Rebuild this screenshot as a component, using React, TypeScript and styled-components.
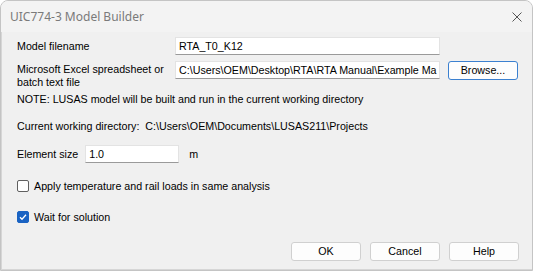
import * as React from 'react';
import styled, { createGlobalStyle } from 'styled-components';

const Global = createGlobalStyle`
	html, body {
		margin: 0;
		padding: 0;
		background: #ffffff;
	}
	body {
		font-family: 'Liberation Sans', Arial, sans-serif;
		font-size: 10.7px;
		color: #000;
	}
`;

const Window = styled.div`
	width: 533px;
	height: 271px;
	box-sizing: border-box;
	border: 1px solid #c4c4c4;
	border-radius: 8px 8px 0 0;
	background: #f0f0f0;
	display: flex;
	flex-direction: column;
	overflow: hidden;
`;

const TitleBar = styled.div`
	height: 31px;
	flex: none;
	background: #f3f3f3;
	display: flex;
	align-items: center;
	justify-content: space-between;
	padding: 0 10px 0 9px;
`;

const Title = styled.span`
	font-family: 'Noto Sans', 'Open Sans', sans-serif;
	font-size: 12px;
	color: #7a7a7a;
`;

const Close = styled.svg`
	width: 10px;
	height: 10px;
`;

const Body = styled.div`
	flex: 1;
	border-left: 1px solid #d6d6d6;
	border-bottom: 1px solid #d6d6d6;
	padding: 5px 0 0 15px;
	display: flex;
	flex-direction: column;
`;

const FormGrid = styled.div`
	display: grid;
	grid-template-columns: 150px 265px 70px;
	column-gap: 8px;
	row-gap: 6px;
	align-items: start;
`;

const Label = styled.div<{ $top?: number }>`
	padding-top: ${p => p.$top ?? 3}px;
	line-height: 13px;
`;

const Field = styled.div<{ $width?: number; $ml?: number }>`
	width: ${p => (p.$width ? `${p.$width}px` : 'auto')};
	margin-left: ${p => p.$ml ?? 0}px;
	height: 18px;
	box-sizing: border-box;
	background: #fff;
	border: 1px solid #e3e3e3;
	border-bottom-color: #9a9a9a;
	padding: 0 3px;
	line-height: 16px;
	white-space: nowrap;
	overflow: hidden;
`;

const Button = styled.div<{ $focus?: boolean }>`
	width: 70px;
	height: 19px;
	box-sizing: border-box;
	border: 1px solid ${p => (p.$focus ? '#3b80d0' : '#d0d0d0')};
	border-radius: 3px;
	background: #fdfdfd;
	display: flex;
	align-items: center;
	justify-content: center;
	line-height: 1;
`;

const TextLine = styled.div<{ $mt: number }>`
	margin-top: ${p => p.$mt}px;
	line-height: 13px;
	white-space: nowrap;
`;

const Row = styled.div<{ $mt: number }>`
	margin-top: ${p => p.$mt}px;
	display: flex;
	align-items: center;
	gap: 5px;
`;

const Box = styled.div<{ $checked?: boolean }>`
	width: 12px;
	height: 12px;
	box-sizing: border-box;
	border-radius: 2px;
	border: 1px solid ${p => (p.$checked ? '#1a63c3' : '#606060')};
	background: ${p => (p.$checked ? '#1a63c3' : '#fff')};
	display: flex;
	align-items: center;
	justify-content: center;
`;

const Unit = styled.span`
	margin-left: 5px;
`;

const Footer = styled.div`
	margin-top: auto;
	margin-bottom: 8px;
	margin-right: 13px;
	display: flex;
	justify-content: flex-end;
	gap: 9px;
`;

export default function App() {
	return (
		<>
			<Global />
			<Window>
				<TitleBar>
					<Title>UIC774-3 Model Builder</Title>
					<Close viewBox="0 0 10 10">
						<path d="M0.5 0.5 L9.5 9.5 M9.5 0.5 L0.5 9.5" stroke="#555" strokeWidth="1" fill="none" />
					</Close>
				</TitleBar>
				<Body>
					<FormGrid>
						<Label>Model filename</Label>
						<Field>RTA_T0_K12</Field>
						<div />
						<Label $top={2}>
							Microsoft Excel spreadsheet or
							<br />
							batch text file
						</Label>
						<Field>C:\Users\OEM\Desktop\RTA\RTA Manual\Example Ma</Field>
						<Button $focus>Browse...</Button>
					</FormGrid>
					<TextLine $mt={4}>NOTE: LUSAS model will be built and run in the current working directory</TextLine>
					<TextLine $mt={14}>Current working directory:&nbsp; C:\Users\OEM\Documents\LUSAS211\Projects</TextLine>
					<Row $mt={12}>
						<span>Element size</span>
						<Field $width={94} $ml={2}>1.0</Field>
						<Unit>m</Unit>
					</Row>
					<Row $mt={17}>
						<Box />
						<span>Apply temperature and rail loads in same analysis</span>
					</Row>
					<Row $mt={19}>
						<Box $checked>
							<svg width="8" height="8" viewBox="0 0 8 8">
								<path d="M1 4.2 L3 6.2 L7 1.8" stroke="#fff" strokeWidth="1.3" fill="none" />
							</svg>
						</Box>
						<span>Wait for solution</span>
					</Row>
					<Footer>
						<Button>OK</Button>
						<Button>Cancel</Button>
						<Button>Help</Button>
					</Footer>
				</Body>
			</Window>
		</>
	);
}
